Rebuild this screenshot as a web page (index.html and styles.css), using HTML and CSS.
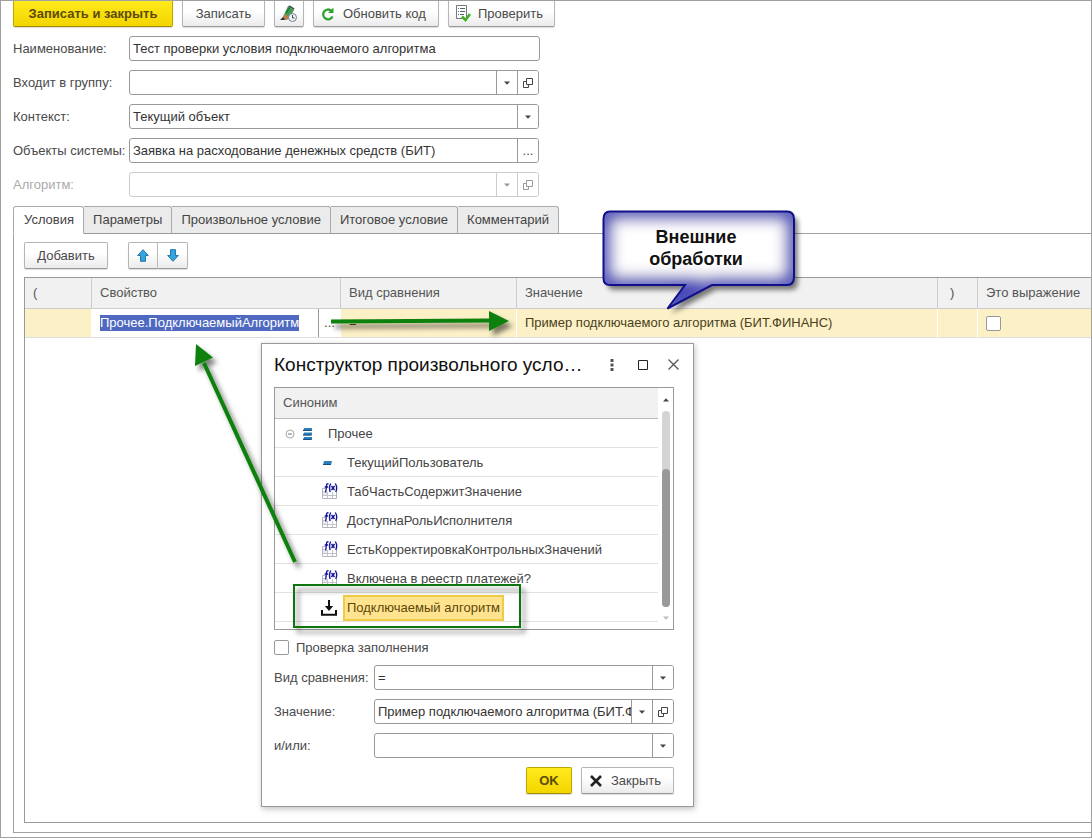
FILE: index.html
```html
<!DOCTYPE html>
<html lang="ru">
<head>
<meta charset="utf-8">
<title>Конструктор произвольного условия</title>
<link rel="stylesheet" href="styles.css">
</head>
<body>
<svg class="sprite" aria-hidden="true">
  <symbol id="caret" viewBox="0 0 6 4"><path d="M0 0.5h6L3 3.7z" fill="currentColor"/></symbol>
  <symbol id="open" viewBox="0 0 10 10"><path d="M3.5.5h6v6h-6zM3.5 3.5h-3v6h5v-3" fill="none" stroke="currentColor"/></symbol>
  <symbol id="fx" viewBox="0 0 17 17">
    <path d="M1.5 5.5h14v10h-14z" fill="#fff" stroke="#b4b4be"/>
    <path d="M2 8.500h13M2 12.500h13M6.500 6v9M11.500 6v9" stroke="#c3c3cc" fill="none"/>
    <path d="M2 9h4v3H2z" fill="#e8e8ee"/>
    <path d="M4 0h13v9H4z" fill="#fff"/>
    <path d="M7.500.8Q5.700.3 5.500 2.500L4.700 9.500M3.700 4h3.500M9.700.500Q7.700 4.500 9.200 9M14.300.500Q16.800 4.500 14.800 9M10.500 3l3 4M13.600 3l-3.200 4" fill="none" stroke="#15159a" stroke-width="1.400"/>
  </symbol>
</svg>
<main class="page">
  <div class="toolbar">
    <button class="btn btn-primary btn-save">Записать и закрыть</button>
    <button class="btn btn-write">Записать</button>
    <button class="btn btn-icon" aria-label="История">
      <svg width="18" height="18" viewBox="0 0 18 18"><path d="M8 1l6 4-5 9-4 1-3-1z" fill="#3f9c50"/><path d="M8 1l2-.5 4.500 3L14 5z" fill="#4b4b4b"/><path d="M2 14l3-5 4 3-3 3z" fill="#c07c4d"/><path d="M0 15l3-3 2 3z" fill="#333"/><path d="M6 8l4-6" stroke="#237b37" stroke-width="1.500"/><circle cx="12.500" cy="12.500" r="4" fill="#eef3f8" stroke="#74808c"/><path d="M12.500 10v3h2" fill="none" stroke="#444"/></svg>
    </button>
    <button class="btn btn-refresh">
      <svg width="14" height="14" viewBox="0 0 14 14"><path d="M10.300 3.700A4.900 4.900 0 1 0 11.500 9.500" fill="none" stroke="#2fa32f" stroke-width="2.300"/><path d="M12.500 .5v5.500H7z" fill="#2fa32f"/></svg>
      Обновить код</button>
    <button class="btn btn-check">
      <svg width="16" height="17" viewBox="0 0 16 17"><path d="M1.500.5h10v13h-10z" fill="#fff" stroke="#6d7982"/><path d="M3 3.500h1M5 3.500h5M3 6.500h1M5 6.500h5M3 9.500h1M5 9.500h4" stroke="#56646e"/><path d="M7 11.500l3.500 3.500L15 9" fill="none" stroke="#3fae2a" stroke-width="2.600"/></svg>
      Проверить</button>
  </div>

  <form class="form">
    <label for="name">Наименование:</label>
    <div class="field field-wide"><input id="name" value="Тест проверки условия подключаемого алгоритма"></div>
    <label for="group">Входит в группу:</label>
    <div class="field"><input id="group"><button type="button" aria-label="Выбрать группу"><svg class="caret"><use href="#caret"/></svg></button><button type="button" aria-label="Открыть группу"><svg class="open"><use href="#open"/></svg></button></div>
    <label for="context">Контекст:</label>
    <div class="field field-select"><select id="context"><option>Текущий объект</option></select><span><svg class="caret"><use href="#caret"/></svg></span></div>
    <label for="objects">Объекты системы:</label>
    <div class="field"><input id="objects" value="Заявка на расходование денежных средств (БИТ)"><button type="button" aria-label="Выбрать объекты">...</button></div>
    <label for="algo" class="muted">Алгоритм:</label>
    <div class="field field-off"><input id="algo" disabled><button type="button" disabled aria-label="Выбрать алгоритм"><svg class="caret"><use href="#caret"/></svg></button><button type="button" disabled aria-label="Открыть алгоритм"><svg class="open"><use href="#open"/></svg></button></div>
  </form>

  <div class="tabs" role="tablist">
    <button role="tab" aria-selected="true" class="tab tab-on">Условия</button>
    <button role="tab" class="tab">Параметры</button>
    <button role="tab" class="tab">Произвольное условие</button>
    <button role="tab" class="tab">Итоговое условие</button>
    <button role="tab" class="tab">Комментарий</button>
  </div>

  <section class="panel">
    <div class="commands">
      <button class="btn btn-add">Добавить</button>
      <div class="pair">
        <button class="btn" aria-label="Вверх"><svg width="12" height="13" viewBox="0 0 12 13"><path d="M6 .7l5.300 5.800H8.500v5.800h-5V6.500H.7z" fill="#36a5dd" stroke="#2276ab"/></svg></button>
        <button class="btn" aria-label="Вниз"><svg width="12" height="13" viewBox="0 0 12 13"><path d="M6 12.300L.7 6.500h2.800V.7h5v5.800h2.800z" fill="#36a5dd" stroke="#2276ab"/></svg></button>
      </div>
    </div>
    <div class="grid">
      <table>
        <colgroup><col class="c-open"><col class="c-prop"><col class="c-kind"><col><col class="c-close"><col class="c-expr"></colgroup>
        <thead><tr><th>(</th><th>Свойство</th><th>Вид сравнения</th><th>Значение</th><th class="paren">)</th><th>Это выражение</th></tr></thead>
        <tbody><tr>
          <td></td>
          <td class="editing"><div class="editor"><input class="picked" aria-label="Свойство" value="Прочее.ПодключаемыйАлгоритм"><button aria-label="Выбрать свойство">...</button></div></td>
          <td>=</td>
          <td>Пример подключаемого алгоритма (БИТ.ФИНАНС)</td>
          <td></td>
          <td><input type="checkbox" class="check" aria-label="Это выражение"></td>
        </tr></tbody>
      </table>
    </div>
  </section>

  <section class="dialog" role="dialog" aria-labelledby="dlg-title">
    <header class="dialog-head">
      <h1 id="dlg-title">Конструктор произвольного условия</h1>
      <button aria-label="Меню"><svg width="4" height="12" viewBox="0 0 4 12"><path d="M.5 0h3v3h-3zM.5 4.500h3v3h-3zM.5 9h3v3h-3z" fill="#555"/></svg></button>
      <button aria-label="Развернуть"><svg width="10" height="10" viewBox="0 0 10 10"><path d="M.5.5h9v9h-9z" fill="none" stroke="#222"/></svg></button>
      <button aria-label="Закрыть окно"><svg width="11" height="11" viewBox="0 0 11 11"><path d="M.5.5l10 10M10.500.5l-10 10" stroke="#555" stroke-width="1.300"/></svg></button>
    </header>
    <div class="list">
      <div class="list-main">
        <div class="list-head">Синоним</div>
        <ul>
          <li class="root"><svg width="10" height="10" viewBox="0 0 10 10"><circle cx="5" cy="5" r="4" fill="#fff" stroke="#aaa"/><path d="M3 5h4" stroke="#777"/></svg><svg width="9" height="12" viewBox="0 0 9 12"><path d="M1 0h8v3H0zM1 4.500h8v3H0zM1 9h8v3H0z" fill="#2b7fb8"/><path d="M0 2.500h8M0 7h8M0 11.500h8" stroke="#164f86"/></svg><span>Прочее</span></li>
          <li><i class="dash"><svg width="9" height="4" viewBox="0 0 9 4"><path d="M1 0h8L8 4H0z" fill="#2b7fb8"/><path d="M0 3.500h8" stroke="#164f86"/></svg></i><span>ТекущийПользователь</span></li>
          <li><i><svg class="fx"><use href="#fx"/></svg></i><span>ТабЧастьСодержитЗначение</span></li>
          <li><i><svg class="fx"><use href="#fx"/></svg></i><span>ДоступнаРольИсполнителя</span></li>
          <li><i><svg class="fx"><use href="#fx"/></svg></i><span>ЕстьКорректировкаКонтрольныхЗначений</span></li>
          <li><i><svg class="fx"><use href="#fx"/></svg></i><span>Включена в реестр платежей?</span></li>
          <li><i><svg width="16" height="16" viewBox="0 0 16 16"><path d="M1 10v4.800h14V10" fill="none" stroke="#111" stroke-width="2"/><path d="M7 0h2v6h3.200L8 11 3.800 6H7z" fill="#111"/></svg></i><span class="current">Подключаемый алгоритм</span></li>
        </ul>
      </div>
      <div class="scroll"><svg class="caret up"><use href="#caret"/></svg><div class="track"><div class="thumb"></div></div><svg class="caret pale"><use href="#caret"/></svg></div>
    </div>
    <label class="check-row"><input type="checkbox" class="check">Проверка заполнения</label>
    <div class="dialog-form">
      <label for="kind">Вид сравнения:</label>
      <div class="field field-select"><select id="kind"><option>=</option></select><span><svg class="caret"><use href="#caret"/></svg></span></div>
      <label for="value">Значение:</label>
      <div class="field"><input id="value" value="Пример подключаемого алгоритма (БИТ.ФИНАНС)"><button type="button" aria-label="Выбрать значение"><svg class="caret"><use href="#caret"/></svg></button><button type="button" aria-label="Открыть значение"><svg class="open"><use href="#open"/></svg></button></div>
      <label for="andor">и/или:</label>
      <div class="field field-select"><select id="andor"><option></option></select><span><svg class="caret"><use href="#caret"/></svg></span></div>
    </div>
    <footer class="dialog-foot">
      <button class="btn btn-primary btn-ok">OK</button>
      <button class="btn btn-close"><svg width="12" height="12" viewBox="0 0 12 12"><path d="M1 1l10 10M11 1L1 11" stroke="#222" stroke-width="2.600"/></svg>Закрыть</button>
    </footer>
  </section>

  <svg class="marks" width="820" height="660" viewBox="0 0 820 660" aria-hidden="true">
    <defs>
      <filter id="drop" x="0" y="0" width="820" height="660" filterUnits="userSpaceOnUse"><feDropShadow dx="4" dy="5" stdDeviation="2.500" flood-color="#000" flood-opacity=".5"/></filter>
      <filter id="soft" x="580" y="190" width="240" height="140" filterUnits="userSpaceOnUse"><feGaussianBlur stdDeviation="7"/></filter>
      <path id="bubble" d="M610 211.500H787Q794 211.500 794 219V277Q794 285 787 285H712L667.500 308.500 685 285H610Q603.500 285 603.500 278V219Q603.500 211.500 610 211.500z"/>
      <clipPath id="inside"><use href="#bubble"/></clipPath>
    </defs>
    <g filter="url(#drop)">
      <path d="M331 321.500L490 320.500" stroke="#0a800a" stroke-width="4"/>
      <path d="M489 311L509 321 489 331z" fill="#0a800a"/>
      <path d="M295 562L204 363" stroke="#0a800a" stroke-width="4"/>
      <path d="M196 344L213 357.500 195 366z" fill="#0a800a"/>
      <path d="M294 585h226v42H294z" fill="none" stroke="#0b740b" stroke-width="2"/>
      <use href="#bubble" fill="#fff"/>
    </g>
    <g clip-path="url(#inside)"><use href="#bubble" fill="#fff" stroke="#4a4ab8" stroke-width="18" filter="url(#soft)"/></g>
    <use href="#bubble" fill="none" stroke="#10108a" stroke-width="2"/>
  </svg>
  <div class="callout">Внешние обработки</div>
</main>
</body>
</html>
```
FILE: styles.css
```css
* { box-sizing: border-box; }
body { margin: 0; font: 13px/16px "Liberation Sans", Arial, sans-serif; color: #4a4a4a; background: #fff; }
button, input, select { font: inherit; color: inherit; margin: 0; }
svg { display: block; flex: none; }
.sprite { position: absolute; width: 0; height: 0; }
.caret { width: 6px; height: 4px; color: #444; }
.open { width: 10px; height: 10px; color: #444; }

.page { position: relative; min-height: 100vh; display: flex; flex-direction: column; border: 1px solid #a0a0a0; padding: 0 0 4px 12px; overflow: hidden; }

.btn { display: flex; align-items: center; justify-content: center; height: 27px; padding: 0; border: 1px solid #b5b5b5; border-bottom-color: #999; border-radius: 2px; background: linear-gradient(#fff 40%, #ebebeb); box-shadow: 0 1px 1px #ddd; white-space: nowrap; }
.btn-primary { font-weight: bold; color: #5c4b08; border-color: #c0a500; border-bottom-color: #a08a00; background: linear-gradient(#ffea1c, #f3d500); }
.toolbar { display: flex; gap: 9px; }
.toolbar .btn { height: 26px; border-top: 0; border-radius: 0 0 2px 2px; }
.btn-save { width: 160px; }
.btn-write { width: 83px; }
.btn-icon { width: 30px; }
.toolbar .btn-refresh { width: 126px; gap: 8px; justify-content: flex-start; padding-left: 7px; }
.toolbar .btn-check { width: 107px; gap: 7px; justify-content: flex-start; padding-left: 6px; }

.form { display: grid; grid-template-columns: 116px 411px; row-gap: 9px; margin-top: 9px; align-items: center; }
.form label { white-space: nowrap; }
.form .muted { color: #aaa; }
.field { display: flex; height: 25px; margin-right: 1px; border: 1px solid #999; border-radius: 3px; background: #fff; overflow: hidden; }
.field-wide { margin-right: 0; }
.field input, .field select { flex: 1; min-width: 0; border: 0; outline: 0; padding: 0 0 0 3px; background: none; color: #333; }
.field button, .field span { display: flex; flex: none; align-items: center; justify-content: center; width: 21px; padding: 0; border: 0; border-left: 1px solid #999; background: #fff; }
.field-select { display: grid; grid-template-columns: 1fr 21px; }
.field-select select { grid-area: 1 / 1 / 2 / 3; appearance: none; }
.field-select span { grid-area: 1 / 2; pointer-events: none; }
.field-off { border-color: #ccc; }
.field-off button { border-color: #ccc; }
.field-off svg { color: #999; }

.tabs { display: flex; margin-top: 9px; position: relative; }
.tab { height: 28px; padding: 0 9px; border: 1px solid #aaa; border-left: 0; border-bottom-color: #999; border-radius: 0 3px 0 0; background: #ebebeb; color: #444; white-space: nowrap; }
.tab-on { padding: 0 9px 0 10px; border-left: 1px solid #aaa; border-radius: 3px 3px 0 0; background: #fff; border-bottom-color: #fff; }
.panel { flex: 1; display: flex; flex-direction: column; margin-top: -1px; border: 1px solid #a0a0a0; border-right: 0; padding: 8px 0 9px 10px; }
.commands { display: flex; gap: 20px; }
.btn-add { width: 84px; }
.pair { display: flex; }
.pair .btn { width: 30px; border-radius: 2px 0 0 2px; }
.pair .btn + .btn { border-left: 0; border-radius: 0 2px 2px 0; }

.grid { flex: 1; margin-top: 8px; border: 1px solid #999; border-right: 0; }
table { width: 100%; table-layout: fixed; border-collapse: separate; border-spacing: 0; }
.c-open { width: 66px; }
.c-prop { width: 249px; }
.c-kind { width: 176px; }
.c-close { width: 40px; }
.c-expr { width: 114px; }
th { height: 31px; padding: 0 8px; text-align: left; font-weight: normal; white-space: nowrap; color: #555; background: #f1f1f1; border-bottom: 1px solid #ccc; border-left: 1px solid #ccc; }
td { height: 29px; padding: 0 8px; white-space: nowrap; color: #4a3f1c; background: #fbf0c6; border-bottom: 1px solid #ddd; border-left: 1px solid #fff; }
th:first-child, td:first-child { border-left: 0; }
.paren { text-align: left; padding-left: 12px; }
.editing { padding: 0 0 0 8px; background: #fff; }
.editor { display: flex; align-items: center; justify-content: space-between; }
.picked { width: 199px; height: 16px; padding: 0; border: 0; background: #4f69c0; color: #fff; }
.editor button { width: 22px; height: 28px; padding: 0; border: 0; border-left: 1px solid #999; background: none; }
.check { appearance: none; display: block; width: 15px; height: 15px; margin: 0; border: 1px solid #999; border-radius: 2px; background: #fff; }

.dialog { position: absolute; left: 260px; top: 342px; width: 433px; padding: 0 19px 12px 12px; border: 1px solid #999; background: #fff; box-shadow: 1px 2px 6px rgba(0, 0, 0, .25); }
.dialog-head { display: flex; align-items: center; height: 43px; margin-right: -15px; padding-bottom: 2px; }
.dialog-head h1 { flex: none; width: 312px; margin: 0 10px 0 0; font-size: 19px; line-height: 24px; font-weight: normal; color: #111; overflow: hidden; text-overflow: ellipsis; white-space: nowrap; }
.dialog-head button { display: flex; align-items: center; justify-content: center; width: 31px; height: 30px; padding: 0; border: 0; background: none; }
.list { display: flex; height: 243px; border: 1px solid #999; }
.list-main { flex: 1; min-width: 0; }
.list-head { height: 31px; padding: 7px 8px; border-bottom: 1px solid #bbb; background: #f1f1f1; color: #555; }
.list ul { margin: 0; padding: 0; list-style: none; }
.list li { display: flex; align-items: center; height: 29px; padding: 1px 0 0 45px; border-bottom: 1px solid #e2e2e2; white-space: nowrap; color: #444; }
.list li i { display: flex; justify-content: center; width: 18px; }
.list li .dash { padding-right: 4px; }
.list li i + span { border: 2px solid transparent; padding: 3px 2px; margin-left: 5px; }
.list li i + .current { border-color: #f0cb45; background: #ffe38f; color: #5c4708; padding: 3px 2px; }
.list li.root { padding-left: 10px; gap: 8px; }
.root span { margin-left: 8px; }
.fx { width: 17px; height: 17px; }
.scroll { display: flex; flex-direction: column; align-items: center; width: 15px; padding: 10px 0 9px; }
.up { transform: rotate(180deg); }
.pale { color: #bbb; }
.track { flex: 1; width: 8px; margin: 9px 0; padding-top: 58px; border-radius: 4px; background: #d4d4d4; }
.thumb { height: 100%; border-radius: 4px; background: #999; }
.check-row { display: flex; align-items: center; gap: 7px; height: 35px; }
.dialog-form { display: grid; grid-template-columns: 100px 1fr; row-gap: 9px; align-items: center; white-space: nowrap; }
.dialog-form .field { margin-right: 0; }
.dialog-foot { display: flex; justify-content: flex-end; gap: 9px; margin-top: 9px; }
.btn-ok { width: 46px; }
.btn.btn-close { width: 93px; gap: 9px; justify-content: flex-start; padding-left: 8px; }

.marks { position: absolute; left: -1px; top: -1px; pointer-events: none; }
.callout { position: absolute; left: 600px; top: 225px; width: 190px; padding: 0 30px; text-align: center; font-size: 18px; line-height: 22px; font-weight: bold; color: #111; }
```
